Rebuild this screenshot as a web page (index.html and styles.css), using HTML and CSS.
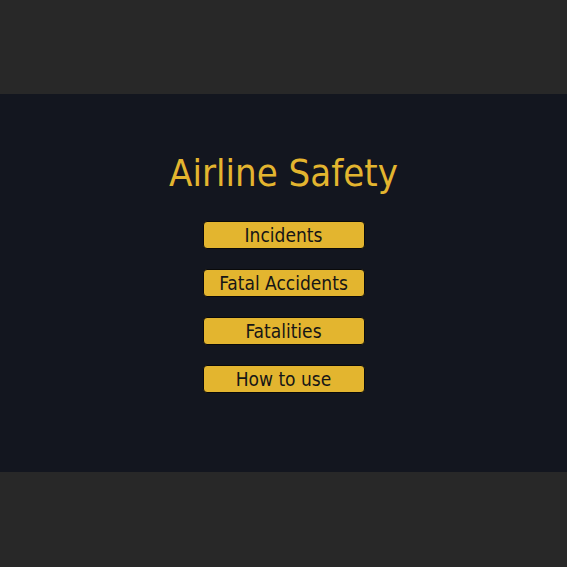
FILE: index.html
```html
<!DOCTYPE html>
<html>
<head>
<meta charset="utf-8">
<link rel="stylesheet" href="styles.css">
</head>
<body>
<div class="band"></div>
<main class="stage">
  <h1 class="title">Airline Safety</h1>
  <nav class="menu">
    <button class="btn">Incidents</button>
    <button class="btn">Fatal Accidents</button>
    <button class="btn">Fatalities</button>
    <button class="btn">How to use</button>
  </nav>
</main>
<div class="band bottom"></div>
</body>
</html>
```
FILE: styles.css
```css
html, body {
  margin: 0;
  padding: 0;
  background: #282828;
  height: 567px;
  overflow: hidden;
}
body {
  display: flex;
  flex-direction: column;
  font-family: "DejaVu Sans Condensed", "DejaVu Sans", sans-serif;
}
.band {
  height: 94px;
  background: #282828;
}
.bottom {
  flex: 1;
}
.stage {
  height: 378px;
  background: #13161f;
  display: flex;
  flex-direction: column;
  align-items: center;
  box-sizing: border-box;
  padding-top: 57px;
}
.title {
  margin: 0;
  font-weight: normal;
  font-size: 38px;
  line-height: 44px;
  color: #e3b52f;
}
.menu {
  margin-top: 26px;
  display: flex;
  flex-direction: column;
  gap: 20px;
}
.btn {
  width: 162px;
  height: 28px;
  box-sizing: border-box;
  background: #e3b52f;
  border: 1px solid #0a0a0a;
  border-radius: 4px;
  color: #161616;
  font-family: inherit;
  font-size: 19px;
  padding: 1px 0 0;
  line-height: 25px;
}
```
